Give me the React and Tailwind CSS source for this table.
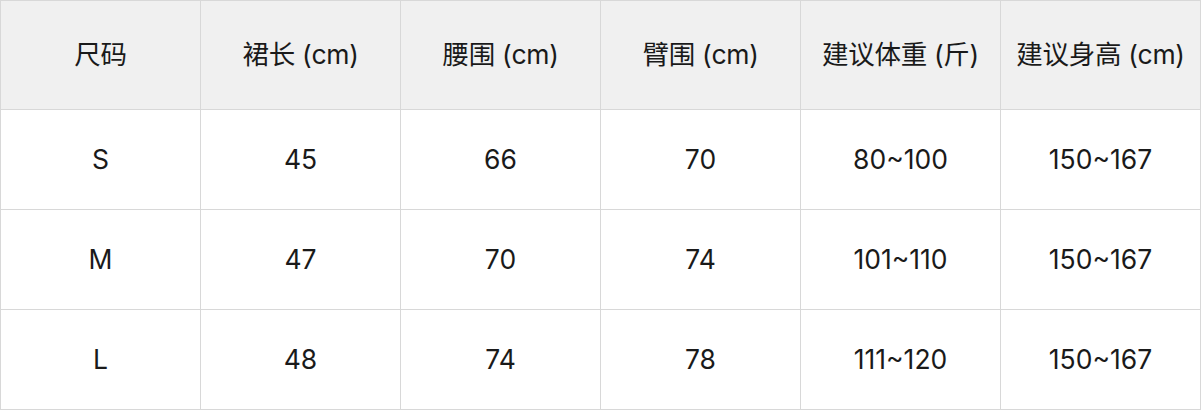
import React from 'react'

const headers = ['尺码', '裙长 (cm)', '腰围 (cm)', '臂围 (cm)', '建议体重 (斤)', '建议身高 (cm)']

const rows = [
  ['S', '45', '66', '70', '80~100', '150~167'],
  ['M', '47', '70', '74', '101~110', '150~167'],
  ['L', '48', '74', '78', '111~120', '150~167'],
]

const font = { fontFamily: 'Inter, "Noto Sans CJK SC", sans-serif' }

export default function App() {
  return (
    <div className="w-[1201px] h-[410px] bg-white text-[#1a1a1a]" style={font}>
      <div className="grid grid-cols-[repeat(6,200px)] border-l border-t border-[#d8d8d8]">
        {headers.map((h) => (
          <div
            key={h}
            className="h-[109px] flex items-center justify-center bg-[#f0f0f0] border-r border-b border-[#d8d8d8] text-[26.5px] whitespace-nowrap tracking-[-0.3px]"
          >
            {h}
          </div>
        ))}
        {rows.map((r, i) =>
          r.map((c, j) => (
            <div
              key={i + '-' + j}
              className="h-[100px] flex items-center justify-center border-r border-b border-[#d8d8d8] text-[26.5px]"
            >
              {c}
            </div>
          ))
        )}
      </div>
    </div>
  )
}
